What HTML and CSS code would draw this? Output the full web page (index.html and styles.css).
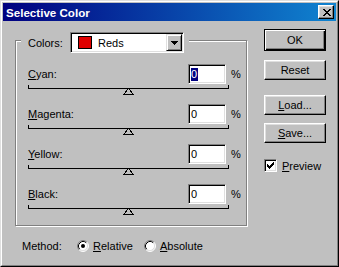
FILE: index.html
```html
<!DOCTYPE html>
<html>
<head>
<meta charset="utf-8">
<link rel="stylesheet" href="styles.css">
</head>
<body>
<div class="window">
  <div class="frame">
    <div class="titlebar">
      <span class="title">Selective Color</span>
      <div class="close">
        <svg width="8" height="7" viewBox="0 0 8 7" shape-rendering="crispEdges"><path fill="#000" d="M0 0h2v1H0z M6 0h2v1H6z M1 1h2v1H1z M5 1h2v1H5z M2 2h4v1H2z M3 3h2v1H3z M2 4h4v1H2z M1 5h2v1H1z M5 5h2v1H5z M0 6h2v1H0z M6 6h2v1H6z"/></svg>
      </div>
    </div>
    <div class="body">
      <div class="left">
        <div class="group">
          <div class="legend">
            <span class="legend-label">Colors:</span>
            <div class="select">
              <span class="swatch"></span>
              <span class="select-text">Reds</span>
              <div class="arrow">
                <svg width="7" height="4" viewBox="0 0 7 4" shape-rendering="crispEdges"><path fill="#000" d="M0 0h7v1H0z M1 1h5v1H1z M2 2h3v1H2z M3 3h1v1H3z"/></svg>
              </div>
            </div>
          </div>
          <div class="rows">
            <div class="row">
              <span class="row-label"><u>C</u>yan:</span>
              <div class="input"><span class="sel">0</span></div>
              <span class="pct">%</span>
            </div>
            <svg class="slider" width="201" height="20" viewBox="0 0 201 20" shape-rendering="crispEdges"><rect x="0" y="4" width="201" height="1" fill="#000"/><rect x="0" y="1" width="1" height="4" fill="#000"/><rect x="200" y="1" width="1" height="4" fill="#000"/><polygon points="100.5,4.5 105.5,10.5 95.5,10.5" fill="#c0c0c0" stroke="#000" stroke-width="1"/></svg>
            <div class="row">
              <span class="row-label"><u>M</u>agenta:</span>
              <div class="input">0</div>
              <span class="pct">%</span>
            </div>
            <svg class="slider" width="201" height="20" viewBox="0 0 201 20" shape-rendering="crispEdges"><rect x="0" y="4" width="201" height="1" fill="#000"/><rect x="0" y="1" width="1" height="4" fill="#000"/><rect x="200" y="1" width="1" height="4" fill="#000"/><polygon points="100.5,4.5 105.5,10.5 95.5,10.5" fill="#c0c0c0" stroke="#000" stroke-width="1"/></svg>
            <div class="row">
              <span class="row-label"><u>Y</u>ellow:</span>
              <div class="input">0</div>
              <span class="pct">%</span>
            </div>
            <svg class="slider" width="201" height="20" viewBox="0 0 201 20" shape-rendering="crispEdges"><rect x="0" y="4" width="201" height="1" fill="#000"/><rect x="0" y="1" width="1" height="4" fill="#000"/><rect x="200" y="1" width="1" height="4" fill="#000"/><polygon points="100.5,4.5 105.5,10.5 95.5,10.5" fill="#c0c0c0" stroke="#000" stroke-width="1"/></svg>
            <div class="row">
              <span class="row-label"><u>B</u>lack:</span>
              <div class="input">0</div>
              <span class="pct">%</span>
            </div>
            <svg class="slider" width="201" height="20" viewBox="0 0 201 20" shape-rendering="crispEdges"><rect x="0" y="4" width="201" height="1" fill="#000"/><rect x="0" y="1" width="1" height="4" fill="#000"/><rect x="200" y="1" width="1" height="4" fill="#000"/><polygon points="100.5,4.5 105.5,10.5 95.5,10.5" fill="#c0c0c0" stroke="#000" stroke-width="1"/></svg>
          </div>
        </div>
        <div class="method">
          <span class="method-label">Method:</span>
          <svg class="radio" width="12" height="12" viewBox="0 0 12 12"><circle cx="6" cy="6" r="5" fill="#fff"/><path d="M2.11 9.89A5.5 5.5 0 0 1 9.89 2.11" fill="none" stroke="#808080"/><path d="M9.89 2.11A5.5 5.5 0 0 1 2.11 9.89" fill="none" stroke="#fff"/><path d="M2.82 9.18A4.5 4.5 0 0 1 9.18 2.82" fill="none" stroke="#000"/><path d="M9.18 2.82A4.5 4.5 0 0 1 2.82 9.18" fill="none" stroke="#dfdfdf"/><circle cx="6" cy="6" r="2" fill="#000"/></svg>
          <span class="radio-label rl1"><u>R</u>elative</span>
          <svg class="radio" width="12" height="12" viewBox="0 0 12 12"><circle cx="6" cy="6" r="5" fill="#fff"/><path d="M2.11 9.89A5.5 5.5 0 0 1 9.89 2.11" fill="none" stroke="#808080"/><path d="M9.89 2.11A5.5 5.5 0 0 1 2.11 9.89" fill="none" stroke="#fff"/><path d="M2.82 9.18A4.5 4.5 0 0 1 9.18 2.82" fill="none" stroke="#000"/><path d="M9.18 2.82A4.5 4.5 0 0 1 2.82 9.18" fill="none" stroke="#dfdfdf"/></svg>
          <span class="radio-label"><u>A</u>bsolute</span>
        </div>
      </div>
      <div class="right">
        <div class="btn btn-default">OK</div>
        <div class="btn btn-reset">Reset</div>
        <div class="btn btn-load"><u>L</u>oad...</div>
        <div class="btn btn-save"><u>S</u>ave...</div>
        <div class="check-row">
          <div class="checkbox">
            <svg width="7" height="7" viewBox="0 0 7 7" shape-rendering="crispEdges"><path fill="#000" d="M6 0h1v1H6z M5 1h2v1H5z M0 2h1v1H0z M4 2h3v1H4z M0 3h2v1H0z M3 3h3v1H3z M0 4h5v1H0z M1 5h3v1H1z M2 6h1v1H2z"/></svg>
          </div>
          <span class="check-label"><u>P</u>review</span>
        </div>
      </div>
    </div>
  </div>
</div>
</body>
</html>
```

FILE: styles.css
```css
* { box-sizing: border-box; }
html, body { margin: 0; padding: 0; background: #c0c0c0; }
body {
  font-family: "Liberation Sans", Arial, sans-serif;
  font-size: 11px;
  color: #000;
  width: 339px;
  height: 267px;
  overflow: hidden;
}
u { text-decoration: underline; text-underline-offset: 1px; }

.window {
  width: 339px;
  height: 267px;
  border: 1px solid;
  border-color: #dfdfdf #000 #000 #dfdfdf;
  background: #c0c0c0;
}
.frame {
  height: 100%;
  border: 1px solid;
  border-color: #fff #808080 #808080 #fff;
  padding: 1px;
  display: flex;
  flex-direction: column;
}
.titlebar {
  height: 18px;
  flex: none;
  background: linear-gradient(to right, #000080, #1084d0);
  display: flex;
  align-items: center;
  padding: 0 2px 0 3px;
}
.title {
  flex: 1;
  color: #fff;
  font-weight: bold;
  font-size: 11.6px;
  line-height: 18px;
  padding-top: 1px;
}
.close {
  width: 16px;
  height: 14px;
  background: #c0c0c0;
  border: 1px solid;
  border-color: #fff #000 #000 #fff;
  box-shadow: inset -1px -1px 0 #808080, inset 1px 1px 0 #dfdfdf;
  display: flex;
  align-items: center;
  justify-content: center;
  padding: 1px 0 0 1px;
}
.close svg { display: block; }

.body {
  flex: 1;
  display: flex;
  padding-left: 12px;
}
.left { width: 233px; }

.group {
  margin-top: 19px;
  width: 232px;
  border: 1px solid #808080;
  box-shadow: inset 1px 1px 0 #fff, 1px 1px 0 #fff;
  padding-bottom: 1px;
}
.legend {
  margin: -9px 0 0 5px;
  width: 168px;
  height: 21px;
  padding: 0 0 0 7px;
  background: #c0c0c0;
  display: flex;
  align-items: center;
}
.legend-label { width: 42px; }
.select {
  width: 114px;
  height: 21px;
  border: 1px solid;
  border-color: #808080 #fff #fff #808080;
  box-shadow: inset 1px 1px 0 #000, inset -1px -1px 0 #dfdfdf;
  background: #fff;
  display: flex;
  align-items: center;
  padding: 1px;
}
.swatch {
  width: 14px;
  height: 13px;
  margin-left: 6px;
  background: #e00000;
  border: 1px solid #000;
}
.select-text { margin-left: 6px; flex: 1; }
.arrow {
  width: 16px;
  height: 17px;
  background: #c0c0c0;
  border: 1px solid;
  border-color: #dfdfdf #000 #000 #dfdfdf;
  box-shadow: inset 1px 1px 0 #fff, inset -1px -1px 0 #808080;
  display: flex;
  align-items: center;
  justify-content: center;
  padding-top: 1px;
}
.arrow svg { display: block; }

.rows {
  margin-top: 11px;
  padding-left: 12px;
}
.row {
  height: 20px;
  display: flex;
  align-items: center;
}
.row-label { width: 160px; }
.input {
  width: 38px;
  height: 20px;
  background: #fff;
  border: 1px solid;
  border-color: #808080 #fff #fff #808080;
  box-shadow: inset 1px 1px 0 #000, inset -1px -1px 0 #dfdfdf;
  padding: 0 0 0 2px;
  display: flex;
  align-items: center;
  line-height: 13px;
}
.sel {
  background: #000080;
  color: #fff;
  padding: 0 1px 0 0;
}
.pct { margin-left: 5px; }
.slider { display: block; }

.method {
  margin-top: 13px;
  height: 14px;
  display: flex;
  align-items: center;
  padding-left: 7px;
}
.method-label { width: 55px; }
.radio { display: block; flex: none; }
.radio-label { margin-left: 4px; }
.rl1 { width: 51px; }

.right {
  margin-left: 16px;
  display: flex;
  flex-direction: column;
}
.btn {
  width: 62px;
  height: 20px;
  background: #c0c0c0;
  border: 1px solid;
  border-color: #fff #000 #000 #fff;
  box-shadow: inset -1px -1px 0 #808080, inset 1px 1px 0 #dfdfdf;
  display: flex;
  align-items: center;
  justify-content: center;
  line-height: 13px;
}
.btn-default {
  margin-top: 8px;
  height: 22px;
  border: 1px solid #000;
  box-shadow: inset 1px 1px 0 #fff, inset -1px -1px 0 #000, inset -2px -2px 0 #808080;
}
.btn-reset { margin-top: 9px; }
.btn-load { margin-top: 15px; }
.btn-save { margin-top: 8px; }

.check-row {
  margin-top: 16px;
  display: flex;
  align-items: center;
  height: 13px;
}
.checkbox {
  width: 13px;
  height: 13px;
  background: #fff;
  border: 1px solid;
  border-color: #808080 #fff #fff #808080;
  box-shadow: inset 1px 1px 0 #000, inset -1px -1px 0 #dfdfdf;
  display: flex;
  align-items: center;
  justify-content: center;
}
.checkbox svg { display: block; }
.check-label { margin-left: 5px; }
```
